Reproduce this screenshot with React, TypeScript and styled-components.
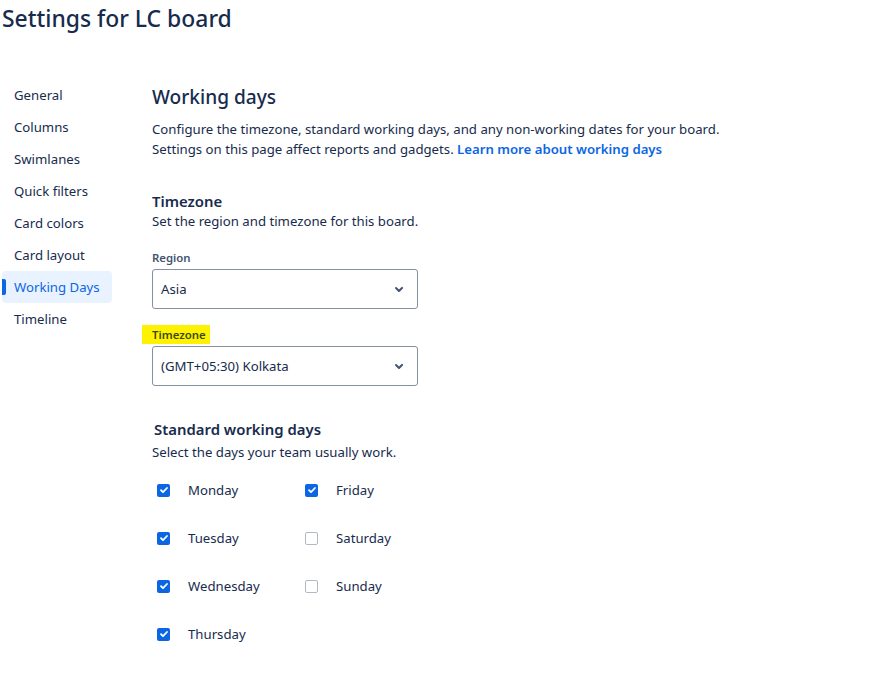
import styled, { createGlobalStyle } from 'styled-components';

const GlobalStyle = createGlobalStyle`
    html, body {
        margin: 0;
        padding: 0;
        background: #ffffff;
        font-family: "Segoe UI", "Noto Sans", sans-serif;
        color: #172B4D;
        overflow: hidden;
    }
`

const navItems = ['General', 'Columns', 'Swimlanes', 'Quick filters', 'Card colors', 'Card layout', 'Working Days', 'Timeline'];

const days = [
    { name: 'Monday', checked: true },
    { name: 'Friday', checked: true },
    { name: 'Tuesday', checked: true },
    { name: 'Saturday', checked: false },
    { name: 'Wednesday', checked: true },
    { name: 'Sunday', checked: false },
    { name: 'Thursday', checked: true },
];

function Chevron() {
    return (
        <svg width="24" height="24" viewBox="0 0 24 24">
            <path d="M8.3 10.3a1 1 0 0 1 1.4 0L12 12.6l2.3-2.3a1 1 0 1 1 1.4 1.4l-3 3a1 1 0 0 1-1.4 0l-3-3a1 1 0 0 1 0-1.4z" fill="#44546F" />
        </svg>
    );
}

function Check() {
    return (
        <svg width="10" height="10" viewBox="0 0 10 10">
            <path d="M2 5.2l2 2 4-4.2" stroke="#fff" strokeWidth="1.8" fill="none" strokeLinecap="round" strokeLinejoin="round" />
        </svg>
    );
}

export default function App() {
    return (
        <>
            <GlobalStyle />
            <Page>
                <Title>Settings for LC board</Title>
                <Layout>
                    <Nav>
                        {navItems.map((item) => (
                            <NavItem key={item} $active={item === 'Working Days'}>{item}</NavItem>
                        ))}
                    </Nav>
                    <Main>
                        <Heading>Working days</Heading>
                        <Paragraph $top={10}>
                            Configure the timezone, standard working days, and any non-working dates for your board.<br />
                            Settings on this page affect reports and gadgets. <Link>Learn more about working days</Link>
                        </Paragraph>

                        <Section $top={32}>
                            <SubHeading>Timezone</SubHeading>
                            <Paragraph>Set the region and timezone for this board.</Paragraph>
                        </Section>

                        <Field $top={19}>
                            <Label>Region</Label>
                            <Select>
                                <span>Asia</span>
                                <Chevron />
                            </Select>
                        </Field>

                        <Field $top={18}>
                            <Label><Highlight>Timezone</Highlight></Label>
                            <Select>
                                <span>(GMT+05:30) Kolkata</span>
                                <Chevron />
                            </Select>
                        </Field>

                        <Section $top={33}>
                            <SubHeading $indent>Standard working days</SubHeading>
                            <Paragraph $top={3}>Select the days your team usually work.</Paragraph>
                        </Section>

                        <DayGrid>
                            {days.map((d) => (
                                <Day key={d.name}>
                                    <Box $checked={d.checked}>{d.checked && <Check />}</Box>
                                    <span>{d.name}</span>
                                </Day>
                            ))}
                        </DayGrid>

                        <SubHeading $indent>Non-working days</SubHeading>
                    </Main>
                </Layout>
            </Page>
        </>
    );
}

const Page = styled.div`
    padding: 4px 0 0 2px;
`

const Title = styled.h1`
    margin: 0;
    font-size: 22.9px;
    font-weight: 500;
    line-height: 30px;
    color: #172B4D;
`

const Layout = styled.div`
    display: flex;
    margin-top: 44px;
`

const Nav = styled.nav`
    width: 110px;
    display: flex;
    flex-direction: column;
    margin-top: 1px;
    margin-right: 40px;
`

const NavItem = styled.div<{ $active?: boolean }>`
    position: relative;
    height: 32px;
    display: flex;
    align-items: center;
    padding-left: 12px;
    font-size: 13.2px;
    border-radius: 4px;
    color: ${(p) => (p.$active ? '#0C66E4' : '#172B4D')};
    background: ${(p) => (p.$active ? '#E9F2FF' : 'transparent')};

    &::before {
        content: '';
        display: ${(p) => (p.$active ? 'block' : 'none')};
        position: absolute;
        left: 0;
        top: 8px;
        width: 4px;
        height: 16px;
        border-radius: 0 2px 2px 0;
        background: #0C66E4;
    }
`

const Main = styled.main`
    display: flex;
    flex-direction: column;
    align-items: flex-start;
`

const Heading = styled.h2`
    margin: 7px 0 0;
    font-size: 19.1px;
    font-weight: 500;
    line-height: 24px;
`

const Paragraph = styled.p<{ $top?: number }>`
    margin: ${(p) => p.$top ?? 0}px 0 0;
    font-size: 13.2px;
    line-height: 20px;
    color: #172B4D;
`

const Link = styled.a`
    color: #0C66E4;
    font-weight: 600;
`

const Section = styled.div<{ $top?: number }>`
    margin-top: ${(p) => p.$top ?? 32}px;
`

const SubHeading = styled.h3<{ $indent?: boolean }>`
    margin: 0;
    font-size: 14.9px;
    font-weight: 600;
    line-height: 20px;
    padding-left: ${(p) => (p.$indent ? 2 : 0)}px;
`

const Field = styled.div<{ $top: number }>`
    margin-top: ${(p) => p.$top}px;
    display: flex;
    flex-direction: column;
    gap: 3px;
`

const Label = styled.label`
    font-size: 11.4px;
    font-weight: 600;
    line-height: 16px;
    color: #44546F;
`

const Highlight = styled.span`
    background: #FFF200;
    color: #3b4a14;
    padding: 2px 4px 2px 10px;
    margin-left: -10px;
`

const Select = styled.div`
    box-sizing: border-box;
    width: 266px;
    height: 40px;
    border: 1px solid #8590A2;
    border-radius: 3px;
    display: flex;
    align-items: center;
    justify-content: space-between;
    padding: 0 6px 0 8px;
    font-size: 13.2px;
    color: #172B4D;
`

const DayGrid = styled.div`
    display: grid;
    grid-template-columns: 148px 150px;
    grid-auto-rows: 48px;
    margin-top: 4px;
    margin-bottom: 29px;
`

const Day = styled.div`
    display: flex;
    align-items: center;
    gap: 18px;
    padding-left: 5px;
    font-size: 13.2px;
`

const Box = styled.span<{ $checked: boolean }>`
    box-sizing: border-box;
    width: 13px;
    height: 13px;
    border-radius: 2px;
    display: flex;
    align-items: center;
    justify-content: center;
    background: ${(p) => (p.$checked ? '#0C66E4' : '#ffffff')};
    border: ${(p) => (p.$checked ? 'none' : '1.5px solid #B3B9C4')};
`
